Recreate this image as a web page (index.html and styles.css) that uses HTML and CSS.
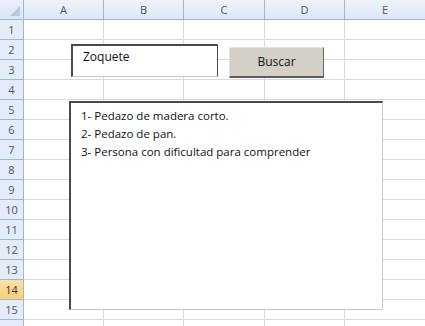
FILE: index.html
```html
<!DOCTYPE html>
<html lang="es">
<head>
  <meta charset="UTF-8" />
  <title>Hoja1</title>
  <link rel="stylesheet" href="styles.css">
</head>
<body>
  <div class="sheet">
    <div class="grid" id="grid">
      <div class="corner"><span class="tri"></span></div>
      <div class="colhead">A</div>
      <div class="colhead">B</div>
      <div class="colhead">C</div>
      <div class="colhead">D</div>
      <div class="colhead">E</div>
    </div>

    <div class="textbox">Zoquete</div>
    <div class="button">Buscar</div>
    <div class="listbox">
      <div class="item">1- Pedazo de madera corto.</div>
      <div class="item">2- Pedazo de pan.</div>
      <div class="item">3- Persona con dificultad para comprender</div>
    </div>
  </div>
  <script>
    const grid = document.getElementById('grid');
    for (let r = 1; r <= 16; r++) {
      const h = document.createElement('div');
      h.className = 'rowhead' + (r === 14 ? ' active' : '');
      // la fila 16 queda cortada por el borde de la ventana
      h.textContent = r < 16 ? r : '';
      grid.appendChild(h);
      for (let c = 0; c < 5; c++) {
        const cell = document.createElement('div');
        cell.className = 'cell';
        grid.appendChild(cell);
      }
    }
  </script>
</body>
</html>
```

FILE: styles.css
```css
:root {
  --grid-line: #d5dae2;
  --head-bg: #e4ecf7;
  --head-line: #9eb6ce;
  --head-text: #4a5668;
  --active-bg: #f9d68f;
  --dark-edge: #4a4a4a;
  --light-edge: #c8c8c8;
}
* { box-sizing: border-box; margin: 0; padding: 0; }
body { background: #fff; font-family: "Open Sans", "DejaVu Sans", sans-serif; overflow: hidden; }
.sheet { position: relative; width: 425px; height: 326px; overflow: hidden; }
.grid {
  display: grid;
  grid-template-columns: 24px 80px 80px 81px 80px 81px;
  grid-template-rows: 20px;
  grid-auto-rows: 20px;
}
.corner {
  position: relative;
  background: linear-gradient(#e9f0f9, #dbe6f4);
  border-right: 1px solid var(--head-line);
  border-bottom: 1px solid var(--head-line);
}
.corner .tri {
  position: absolute;
  right: 3px; bottom: 3px;
  width: 0; height: 0;
  border-left: 10px solid transparent;
  border-bottom: 10px solid #b7c9df;
}
.colhead {
  background: linear-gradient(#eef3fa, #dde8f5);
  border-right: 1px solid var(--head-line);
  border-bottom: 1px solid var(--head-line);
  color: var(--head-text);
  font-size: 11px;
  line-height: 19px;
  text-align: center;
}
.rowhead {
  background: var(--head-bg);
  border-right: 1px solid var(--head-line);
  border-bottom: 1px solid var(--head-line);
  color: var(--head-text);
  font-size: 11px;
  line-height: 19px;
  text-align: center;
}
.rowhead.active { background: linear-gradient(#fbe0a6, #f7cf7c); color: #3a3020; }
.cell { border-right: 1px solid var(--grid-line); border-bottom: 1px solid var(--grid-line); }

/* controles encima de la hoja */
.textbox {
  position: absolute;
  left: 71px; top: 44px;
  width: 147px; height: 33px;
  background: #fff;
  border-top: 2px solid var(--dark-edge);
  border-left: 2px solid var(--dark-edge);
  border-right: 1px solid var(--dark-edge);
  border-bottom: 1px solid var(--light-edge);
  padding: 2px 0 0 10px;
  font-size: 12px;
  color: #111;
}
.button {
  position: absolute;
  left: 229px; top: 47px;
  width: 95px; height: 31px;
  background: #d4d0c8;
  border-top: 1px solid #e6e3de;
  border-left: 1px solid #e6e3de;
  border-right: 1px solid #6a6a6a;
  border-bottom: 2px solid #5a5a5a;
  font-size: 12px;
  line-height: 28px;
  text-align: center;
  color: #111;
}
.listbox {
  position: absolute;
  left: 69px; top: 101px;
  width: 314px; height: 209px;
  background: #fff;
  border-top: 2px solid var(--dark-edge);
  border-left: 2px solid var(--dark-edge);
  border-right: 1px solid var(--light-edge);
  border-bottom: 1px solid var(--light-edge);
  padding: 4px 0 0 10px;
}
.item { font-size: 11.5px; line-height: 18px; color: #111; white-space: nowrap; }
```
